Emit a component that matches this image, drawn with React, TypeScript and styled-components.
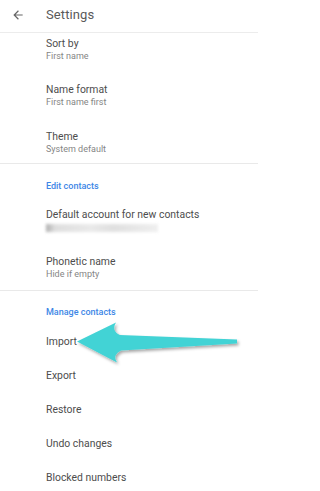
import React from "react";
import styled, { createGlobalStyle } from "styled-components";

const Global = createGlobalStyle`
  html, body { margin: 0; padding: 0; background: #ffffff; }
  body { font-family: Roboto, "Noto Sans", "Liberation Sans", sans-serif; -webkit-font-smoothing: antialiased; }
  * { box-sizing: border-box; }
`;

const Page = styled.div`
  position: relative;
  width: 258px;
  height: 491px;
  overflow: hidden;
  background: #ffffff;
`;

const TopBar = styled.header`
  height: 33px;
  display: flex;
  align-items: center;
  border-bottom: 1px solid #ececec;
  padding-left: 11px;
`;

const BackButton = styled.span`
  display: flex;
  width: 14px;
  height: 14px;
  margin-right: 21px;
  margin-top: -3px;
  color: #666666;
`;

const Title = styled.h1`
  margin: 0;
  margin-top: -3px;
  font-size: 13px;
  font-weight: 400;
  color: #5a5a5a;
  letter-spacing: 0.1px;
`;

const Section = styled.section<{ $divider?: boolean }>`
  display: flex;
  flex-direction: column;
  border-top: ${(p) => (p.$divider ? "1px solid #e9e9e9" : "none")};
  padding-left: 46px;
`;

const SectionHeader = styled.h2`
  margin: 0;
  padding: 15.5px 0 5px;
  font-size: 9px;
  line-height: 13px;
  font-weight: 500;
  color: #3d86e6;
`;

const Item = styled.div<{ $pt?: number; $pb?: number }>`
  display: flex;
  flex-direction: column;
  padding-top: ${(p) => (p.$pt !== undefined ? p.$pt : 10.5)}px;
  padding-bottom: ${(p) => (p.$pb !== undefined ? p.$pb : 10.5)}px;
`;

const ActionItem = styled.div`
  padding: 10.6px 0;
`;

const ItemTitle = styled.div`
  font-size: 10.4px;
  line-height: 13px;
  color: #4d4d4d;
  white-space: nowrap;
`;

const ItemSub = styled.div`
  font-size: 9px;
  line-height: 13px;
  color: #858585;
  white-space: nowrap;
`;

const Redacted = styled.div`
  position: relative;
  width: 112px;
  height: 8px;
  margin-top: 2.5px;
  margin-bottom: 2.5px;
  background: linear-gradient(90deg, #9a9a9a 0px, #d6d6d6 8%, #e4e4e4 40%, #d8d8d8 60%, #ebebeb 100%);
  filter: blur(1.5px);
  opacity: 0.8;
`;

const Overlay = styled.svg`
  position: absolute;
  left: 0;
  top: 0;
  width: 258px;
  height: 491px;
  pointer-events: none;
`;

const BackIcon = () => (
  <svg viewBox="0 0 24 24" width="14" height="14" fill="currentColor">
    <path d="M20 11H7.83l5.59-5.59L12 4l-8 8 8 8 1.41-1.41L7.83 13H20v-2z" />
  </svg>
);

export default function App() {
  return (
    <Page>
      <Global />
      <TopBar>
        <BackButton>
          <BackIcon />
        </BackButton>
        <Title>Settings</Title>
      </TopBar>

      <Section>
        <Item $pt={3.5} $pb={10.25}>
          <ItemTitle>Sort by</ItemTitle>
          <ItemSub>First name</ItemSub>
        </Item>
        <Item $pt={10.25} $pb={10.25}>
          <ItemTitle>Name format</ItemTitle>
          <ItemSub>First name first</ItemSub>
        </Item>
        <Item $pt={10.25} $pb={7.5}>
          <ItemTitle>Theme</ItemTitle>
          <ItemSub>System default</ItemSub>
        </Item>
      </Section>

      <Section $divider>
        <SectionHeader>Edit contacts</SectionHeader>
        <Item>
          <ItemTitle>Default account for new contacts</ItemTitle>
          <Redacted />
        </Item>
        <Item $pb={8.5}>
          <ItemTitle>Phonetic name</ItemTitle>
          <ItemSub>Hide if empty</ItemSub>
        </Item>
      </Section>

      <Section $divider>
        <SectionHeader>Manage contacts</SectionHeader>
        <ActionItem>
          <ItemTitle>Import</ItemTitle>
        </ActionItem>
        <ActionItem>
          <ItemTitle>Export</ItemTitle>
        </ActionItem>
        <ActionItem>
          <ItemTitle>Restore</ItemTitle>
        </ActionItem>
        <ActionItem>
          <ItemTitle>Undo changes</ItemTitle>
        </ActionItem>
        <ActionItem>
          <ItemTitle>Blocked numbers</ItemTitle>
        </ActionItem>
      </Section>

      <Overlay viewBox="0 0 258 491">
        <defs>
          <filter id="sh" x="-20%" y="-50%" width="140%" height="200%">
            <feDropShadow dx="1.5" dy="2" stdDeviation="1.6" floodColor="#000" floodOpacity="0.35" />
          </filter>
        </defs>
        <path
          d="M77 341.5 L116 322.5 Q111 331 120 335 L237 339.5 L237 343.5 L121 350.5 Q112 355 117 362.5 Z"
          fill="#43d3d5"
          filter="url(#sh)"
        />
      </Overlay>
    </Page>
  );
}
